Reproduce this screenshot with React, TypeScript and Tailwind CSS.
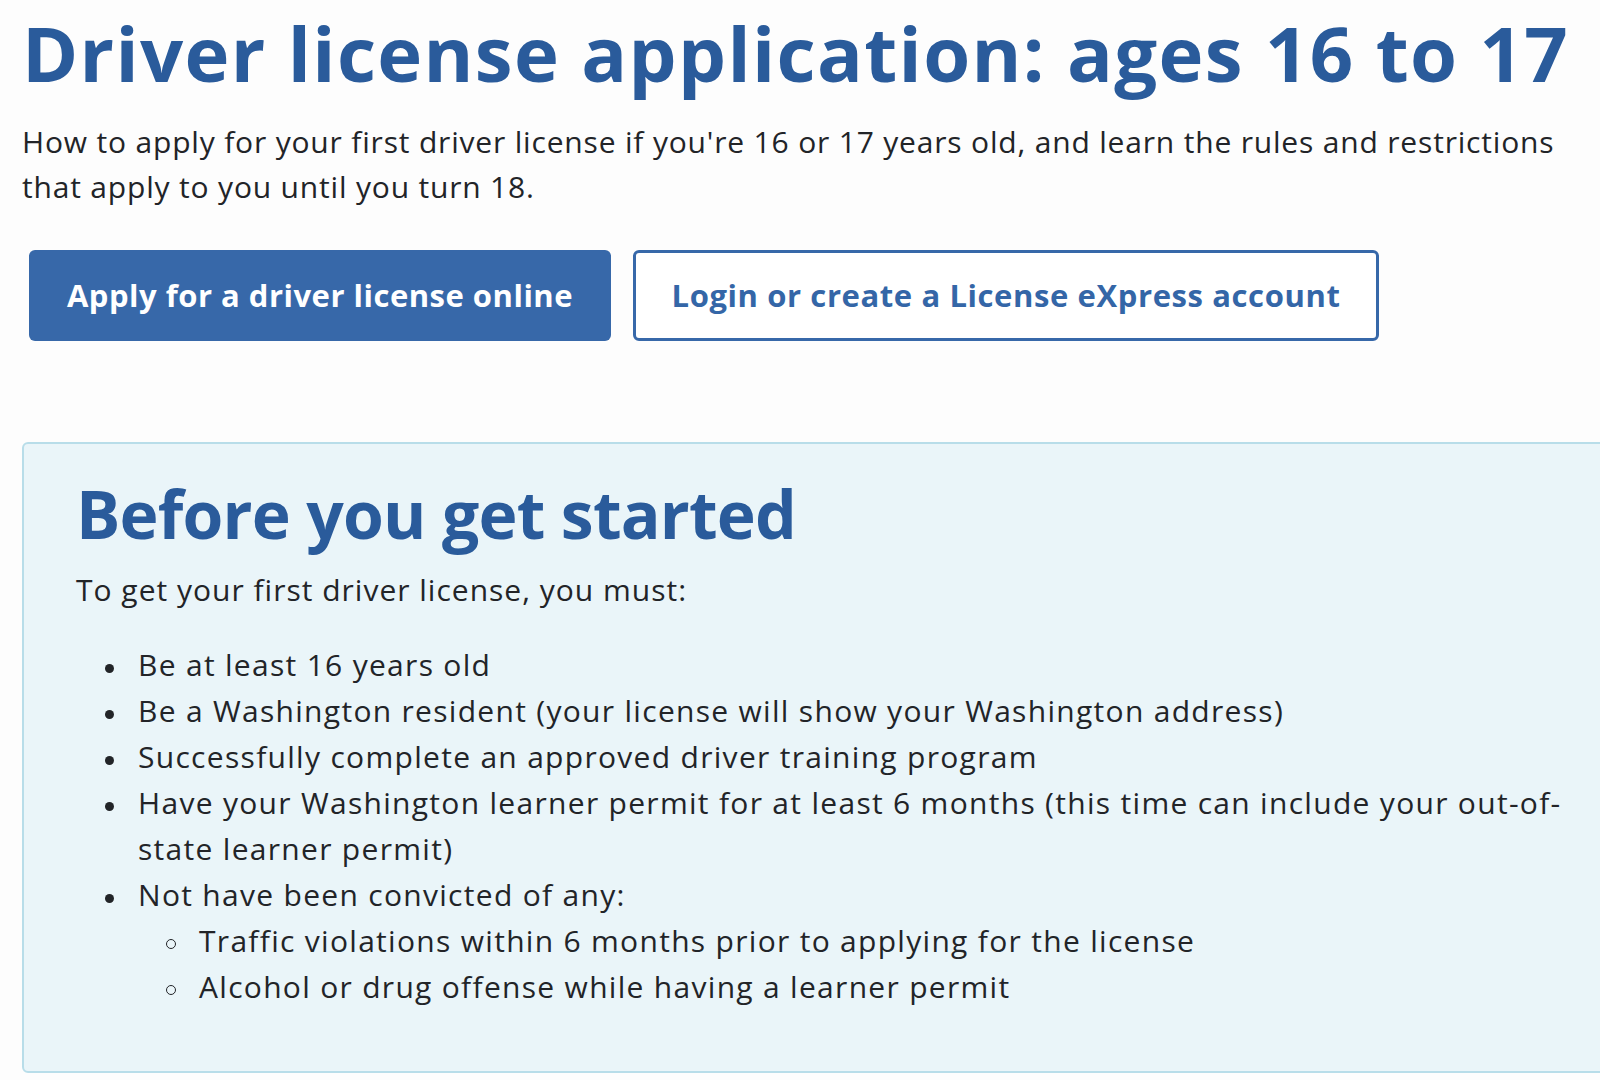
import React from "react";

const Disc = () => (
  <span className="w-[29px] shrink-0 flex items-center h-[46px] pt-[6px]">
    <span className="ml-[-4.5px] w-[9px] h-[9px] rounded-full bg-[#222428]" />
  </span>
);

const Circle = () => (
  <span className="w-[29px] shrink-0 flex items-center h-[46px] pt-[6px]">
    <span className="ml-[-4px] w-[10px] h-[10px] rounded-full border-[1.5px] border-[#222428]" />
  </span>
);

export default function App() {
  return (
    <div
      className="w-full min-h-[1080px] bg-[#fdfdfd] overflow-hidden text-[#222428]"
      style={{ fontFamily: '"Open Sans", "Liberation Sans", sans-serif' }}
    >
      <div className="pl-[22px]">
        <h1 className="pt-[15px] text-[76px] leading-[76px] font-bold text-[#2a5b9b] whitespace-nowrap tracking-[1.35px]">
          Driver license application: ages 16 to 17
        </h1>
        <p className="mt-[28px] text-[30px] leading-[45px] whitespace-nowrap tracking-[0.82px]">
          How to apply for your first driver license if you're 16 or 17 years old, and learn the rules and restrictions
          <br />
          that apply to you until you turn 18.
        </p>
        <div className="mt-[41px] ml-[7px] flex gap-[22px]">
          <a className="w-[582px] h-[91px] rounded-[6px] bg-[#3768a9] text-white font-bold text-[31px] tracking-[0.5px] flex items-center justify-center whitespace-nowrap">
            Apply for a driver license online
          </a>
          <a className="w-[746px] h-[91px] rounded-[6px] border-[3px] border-[#3768a9] bg-white text-[#3466a7] font-bold text-[31px] tracking-[0.6px] flex items-center justify-center whitespace-nowrap">
            Login or create a License eXpress account
          </a>
        </div>
        <section className="mt-[101px] w-[1640px] h-[631px] rounded-[6px] border-2 border-[#b8dde9] bg-[#eaf5f9] pl-[52px] pt-[36px]">
          <h2 className="text-[66px] leading-[66px] font-bold text-[#2a5b9b] whitespace-nowrap tracking-[-0.8px]">
            Before you get started
          </h2>
          <p className="mt-[21px] text-[30px] leading-[45px] whitespace-nowrap tracking-[1px]">
            To get your first driver license, you must:
          </p>
          <ul className="mt-[30px] pl-[33px] text-[30px] leading-[46px] tracking-[1.3px]">
            <li className="flex">
              <Disc />
              <span>Be at least 16 years old</span>
            </li>
            <li className="flex">
              <Disc />
              <span>Be a Washington resident (your license will show your Washington address)</span>
            </li>
            <li className="flex">
              <Disc />
              <span>Successfully complete an approved driver training program</span>
            </li>
            <li className="flex">
              <Disc />
              <span className="whitespace-nowrap">
                Have your Washington learner permit for at least 6 months (this time can include your out-of-
                <br />
                state learner permit)
              </span>
            </li>
            <li className="flex">
              <Disc />
              <div>
                <span>Not have been convicted of any:</span>
                <ul className="pl-[32px]">
                  <li className="flex">
                    <Circle />
                    <span>Traffic violations within 6 months prior to applying for the license</span>
                  </li>
                  <li className="flex">
                    <Circle />
                    <span>Alcohol or drug offense while having a learner permit</span>
                  </li>
                </ul>
              </div>
            </li>
          </ul>
        </section>
      </div>
    </div>
  );
}
